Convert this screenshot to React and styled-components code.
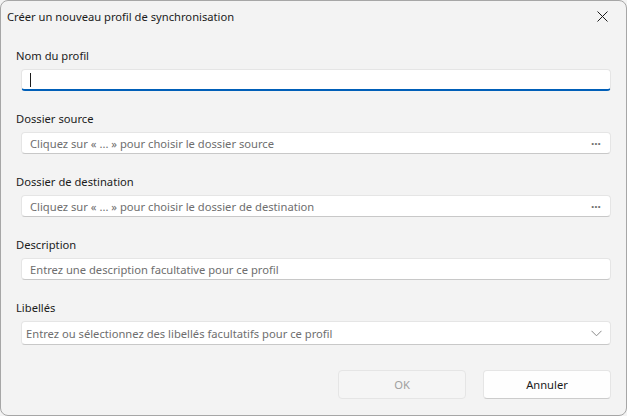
import styled, { createGlobalStyle } from "styled-components";

const GlobalStyle = createGlobalStyle`
  html, body {
    margin: 0;
    padding: 0;
    background: #f3f3f3;
  }
  body {
    font-family: "Noto Sans", "Open Sans", sans-serif;
    font-size: 11.2px;
    color: #1b1b1b;
  }
`;

const fields = [
  { label: "Nom du profil", kind: "focus" },
  {
    label: "Dossier source",
    placeholder: "Cliquez sur « ... » pour choisir le dossier source",
    kind: "browse",
  },
  {
    label: "Dossier de destination",
    placeholder: "Cliquez sur « ... » pour choisir le dossier de destination",
    kind: "browse",
  },
  {
    label: "Description",
    placeholder: "Entrez une description facultative pour ce profil",
    kind: "text",
  },
];

function CloseIcon() {
  return (
    <svg width="11" height="11" viewBox="0 0 11 11">
      <path d="M0.5 0.5 L10.5 10.5 M10.5 0.5 L0.5 10.5" stroke="#1b1b1b" strokeWidth="1" />
    </svg>
  );
}

function Chevron() {
  return (
    <svg width="11" height="7" viewBox="0 0 11 7">
      <path d="M0.5 0.8 L5.5 5.8 L10.5 0.8" stroke="#8a8a8a" strokeWidth="1" fill="none" />
    </svg>
  );
}

function App() {
  return (
    <>
      <GlobalStyle />
      <Window>
        <TitleBar>
          <Title>Créer un nouveau profil de synchronisation</Title>
          <CloseButton>
            <CloseIcon />
          </CloseButton>
        </TitleBar>
        <Content>
          {fields.map((f) => (
            <Field key={f.label}>
              <Label>{f.label}</Label>
              <InputBox $focused={f.kind === "focus"}>
                {f.kind === "focus" ? (
                  <Caret />
                ) : (
                  <Placeholder>{f.placeholder}</Placeholder>
                )}
                {f.kind === "browse" && <Dots>···</Dots>}
              </InputBox>
            </Field>
          ))}
          <Field>
            <Label>Libellés</Label>
            <ComboBox>
              <ComboText>Entrez ou sélectionnez des libellés facultatifs pour ce profil</ComboText>
              <Chevron />
            </ComboBox>
          </Field>
        </Content>
        <Footer>
          <Button disabled>OK</Button>
          <Button>Annuler</Button>
        </Footer>
      </Window>
    </>
  );
}

const Window = styled.div`
  box-sizing: border-box;
  width: 627px;
  height: 416px;
  border: 1px solid #a6a6a6;
  border-radius: 8px;
  background: #f3f3f3;
  display: flex;
  flex-direction: column;
  overflow: hidden;
`;

const TitleBar = styled.div`
  height: 31px;
  display: flex;
  align-items: center;
  justify-content: space-between;
  padding: 0 12px 0 6px;
`;

const Title = styled.span`
  color: #1b1b1b;
`;

const CloseButton = styled.div`
  width: 24px;
  height: 24px;
  display: flex;
  align-items: center;
  justify-content: center;
`;

const Content = styled.div`
  display: flex;
  flex-direction: column;
  gap: 20px;
  padding: 16px 15px 0 15px;
`;

const Field = styled.div`
  display: flex;
  flex-direction: column;
  gap: 5px;
`;

const Label = styled.div`
  line-height: 16px;
  color: #1b1b1b;
`;

const InputBox = styled.div`
  box-sizing: border-box;
  margin-left: 5px;
  height: 22px;
  display: flex;
  align-items: center;
  padding: 0 8px;
  background: #ffffff;
  border: 1px solid #e5e5e5;
  border-bottom: ${(p) => (p.$focused ? "2px solid #005fb8" : "1px solid #c8c8c8")};
  border-radius: 4px;
`;

const Caret = styled.div`
  width: 1px;
  height: 14px;
  background: #1b1b1b;
`;

const Placeholder = styled.span`
  flex: 1;
  color: #6e6e6e;
  white-space: nowrap;
`;

const Dots = styled.span`
  color: #6e6e6e;
  font-size: 12px;
  font-weight: 700;
  margin-right: 1px;
`;

const ComboBox = styled.div`
  box-sizing: border-box;
  margin-left: 5px;
  height: 24px;
  display: flex;
  align-items: center;
  justify-content: space-between;
  padding: 0 8px 0 4px;
  background: #ffffff;
  border: 1px solid #e5e5e5;
  border-bottom-color: #c8c8c8;
  border-radius: 4px;
`;

const ComboText = styled.span`
  color: #6e6e6e;
`;

const Footer = styled.div`
  margin-top: auto;
  display: flex;
  justify-content: flex-end;
  gap: 17px;
  padding: 0 15px 16px 0;
`;

const Button = styled.button`
  box-sizing: border-box;
  width: 128px;
  height: 29px;
  font-family: inherit;
  font-size: 11.2px;
  color: #1b1b1b;
  background: #fefefe;
  border: 1px solid #e5e5e5;
  border-bottom-color: #cccccc;
  border-radius: 4px;

  &:disabled {
    color: #a0a0a0;
    background: #f5f5f5;
    border-color: #e5e5e5;
  }
`;

export default App;
